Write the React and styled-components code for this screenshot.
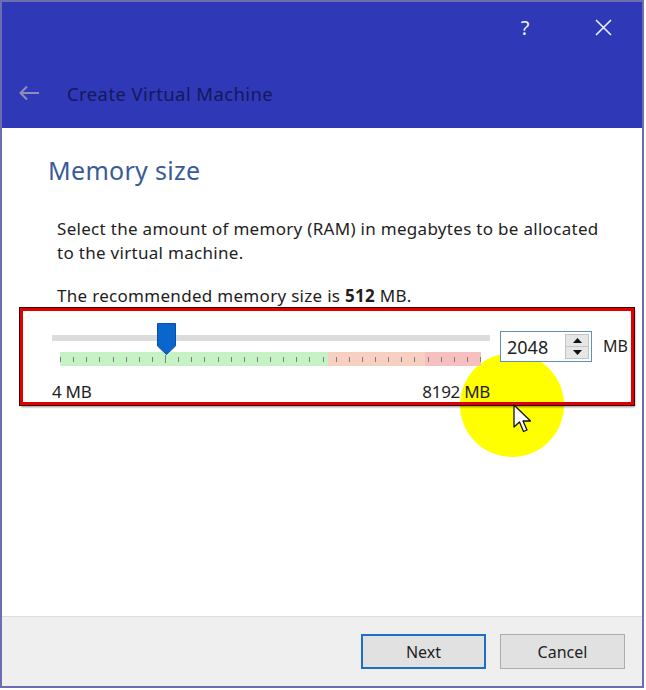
import styled, { createGlobalStyle } from 'styled-components';

const GlobalStyle = createGlobalStyle`
  html, body {
    margin: 0;
    padding: 0;
    background: #ffffff;
  }
  body {
    font-family: "Noto Sans", "Open Sans", sans-serif;
    color: #1e1e1e;
  }
`;

const MIN = 4;
const MAX = 8192;
const VALUE = 2048;
const TRACK_WIDTH = 438;
const THUMB_WIDTH = 21;
const TICKS = 33;

function App() {
  const thumbLeft = ((VALUE - MIN) / (MAX - MIN)) * (TRACK_WIDTH - THUMB_WIDTH);

  return (
    <>
      <GlobalStyle />
      <Window>
        <Header>
          <CaptionBar>
            <CaptionButton>?</CaptionButton>
            <CaptionButton>
              <svg width="17" height="17" viewBox="0 0 17 17">
                <path d="M1 1 L16 16 M16 1 L1 16" stroke="#eef0ff" strokeWidth="1.6" />
              </svg>
            </CaptionButton>
          </CaptionBar>
          <TitleRow>
            <svg width="22" height="16" viewBox="0 0 22 16">
              <path d="M21 8 H3 M9 1.5 L2.5 8 L9 14.5" stroke="#8d8fb8" strokeWidth="2" fill="none" />
            </svg>
            <Title>Create Virtual Machine</Title>
          </TitleRow>
        </Header>

        <Content>
          <Heading>Memory size</Heading>
          <Text>
            Select the amount of memory (RAM) in megabytes to be allocated
            <br />
            to the virtual machine.
          </Text>
          <Text $gap={19}>
            The recommended memory size is <b>512</b> MB.
          </Text>

          <Spot />
          <Highlight>
            <SliderColumn>
              <TrackArea>
                <Track />
                <Thumb style={{ left: thumbLeft }}>
                  <svg width="21" height="34" viewBox="0 0 21 34">
                    <path d="M1.5 1.5 H19.5 V24 L10.5 32.5 L1.5 24 Z" fill="#0a66cc" stroke="#0752a8" strokeWidth="1" />
                  </svg>
                </Thumb>
              </TrackArea>
              <Band>
                {Array.from({ length: TICKS }).map((_, i) => (
                  <Tick key={i} $tall={i === 8} />
                ))}
              </Band>
              <Labels>
                <span>4 MB</span>
                <span>8192 MB</span>
              </Labels>
            </SliderColumn>

            <SpinBox>
              <SpinValue>2048</SpinValue>
              <SpinButtons>
                <SpinHalf>
                  <svg width="9" height="5" viewBox="0 0 9 5"><path d="M0 5 L4.5 0 L9 5 Z" fill="#111" /></svg>
                </SpinHalf>
                <SpinHalf>
                  <svg width="9" height="5" viewBox="0 0 9 5"><path d="M0 0 L4.5 5 L9 0 Z" fill="#111" /></svg>
                </SpinHalf>
              </SpinButtons>
            </SpinBox>
            <Unit>MB</Unit>
          </Highlight>

          <Cursor>
            <svg width="22" height="30" viewBox="0 0 22 30">
              <path d="M1 1 L1 23 L6.5 18 L10.5 27.5 L14 26 L10 17 L17.5 17 Z" fill="#ffffff" stroke="#111" strokeWidth="1.3" strokeLinejoin="round" />
            </svg>
          </Cursor>
        </Content>

        <Footer>
          <Button $primary>Next</Button>
          <Button>Cancel</Button>
        </Footer>
      </Window>
    </>
  );
}

const Window = styled.div`
  width: 644px;
  height: 688px;
  box-sizing: border-box;
  border: 2px solid #6d6db3;
  display: flex;
  flex-direction: column;
  background: #ffffff;
`;

const Header = styled.div`
  height: 126px;
  background: #2f38b7;
  display: flex;
  flex-direction: column;
`;

const CaptionBar = styled.div`
  height: 50px;
  display: flex;
  justify-content: flex-end;
`;

const CaptionButton = styled.div`
  width: 78px;
  display: flex;
  align-items: center;
  justify-content: center;
  color: #eef0ff;
  font-family: "Noto Sans", sans-serif;
  font-size: 20px;
`;

const TitleRow = styled.div`
  flex: 1;
  display: flex;
  align-items: center;
  padding: 6px 0 0 16px;

  svg {
    flex: none;
  }
`;

const Title = styled.div`
  margin-left: 27px;
  color: #15185a;
  font-size: 18.5px;
  letter-spacing: 0.4px;
`;

const Content = styled.div`
  position: relative;
  flex: 1;
  display: flex;
  flex-direction: column;
  align-items: flex-start;
  padding-top: 27px;
`;

const Heading = styled.div`
  margin-left: 46px;
  color: #3a5b9a;
  font-size: 25px;
  letter-spacing: 0.3px;
  line-height: 30px;
`;

const Text = styled.div`
  margin: ${(p) => p.$gap ?? 32}px 0 0 55px;
  font-size: 17px;
  letter-spacing: 0.3px;
  line-height: 24px;
  color: #1e1e1e;

  b {
    font-weight: 700;
  }
`;

const Spot = styled.div`
  position: absolute;
  left: 458px;
  top: 225px;
  width: 104px;
  height: 104px;
  border-radius: 50%;
  background: radial-gradient(circle, #ffff00 0%, #ffff00 90%, #fdfd60 100%);
`;

const Highlight = styled.div`
  position: relative;
  margin: 0 0 0 18px;
  width: 614px;
  height: 97px;
  box-sizing: border-box;
  border: 3px solid #e00000;
  box-shadow: 0 0 0 1px #3a0000, 1px 2px 2px rgba(0, 0, 0, 0.45);
  display: flex;
  align-items: flex-start;
  padding: 11px 0 0 29px;
`;

const SliderColumn = styled.div`
  width: ${TRACK_WIDTH}px;
  display: flex;
  flex-direction: column;
`;

const TrackArea = styled.div`
  position: relative;
  height: 30px;
`;

const Track = styled.div`
  margin-top: 13px;
  height: 6px;
  background: #dcdcdc;
  border-radius: 1px;
`;

const Thumb = styled.div`
  position: absolute;
  top: 0;
  width: ${THUMB_WIDTH}px;
  height: 34px;
  z-index: 2;

  svg {
    display: block;
  }
`;

const Band = styled.div`
  margin-left: 8px;
  width: 421px;
  height: 14px;
  display: flex;
  align-items: center;
  justify-content: space-between;
  background: linear-gradient(
    to right,
    #c6f3c6 0,
    #c6f3c6 268px,
    #f8d0c1 268px,
    #f8d0c1 365px,
    #f6bfc0 365px,
    #f6bfc0 100%
  );
`;

const Tick = styled.div`
  width: 1px;
  height: ${(p) => (p.$tall ? 8 : 5)}px;
  background: #7d7d7d;
`;

const Labels = styled.div`
  margin-top: 16px;
  display: flex;
  justify-content: space-between;
  font-size: 17px;
  line-height: 20px;
  letter-spacing: -0.3px;
  color: #1e1e1e;
`;

const SpinBox = styled.div`
  position: relative;
  z-index: 1;
  margin: 9px 0 0 10px;
  width: 92px;
  height: 31px;
  box-sizing: border-box;
  border: 1px solid #5f8fbf;
  background: #ffffff;
  display: flex;
  align-items: center;
  padding: 2px 2px 2px 6px;
`;

const SpinValue = styled.div`
  flex: 1;
  font-size: 18px;
  letter-spacing: 0;
  color: #1e1e1e;
`;

const SpinButtons = styled.div`
  width: 24px;
  height: 100%;
  display: flex;
  flex-direction: column;
  border: 1px solid #c4c4c4;
  box-sizing: border-box;
  background: #e6e6e6;
`;

const SpinHalf = styled.div`
  flex: 1;
  display: flex;
  align-items: center;
  justify-content: center;

  & + & {
    border-top: 1px solid #c4c4c4;
  }
`;

const Unit = styled.div`
  margin: 13px 0 0 11px;
  font-size: 16px;
  color: #1e1e1e;
`;

const Cursor = styled.div`
  position: absolute;
  left: 511px;
  top: 276px;
  z-index: 3;

  svg {
    display: block;
  }
`;

const Footer = styled.div`
  height: 70px;
  box-sizing: border-box;
  border-top: 1px solid #dedede;
  background: #efefef;
  display: flex;
  align-items: center;
  justify-content: flex-end;
  gap: 14px;
  padding-right: 17px;
`;

const Button = styled.button`
  width: 125px;
  height: 35px;
  box-sizing: border-box;
  border: ${(p) => (p.$primary ? '2px solid #1f6fc5' : '1px solid #adadad')};
  background: #e1e1e1;
  font-family: "Noto Sans", sans-serif;
  font-size: 16px;
  color: #1e1e1e;
  padding: 0;
`;

export default App;
